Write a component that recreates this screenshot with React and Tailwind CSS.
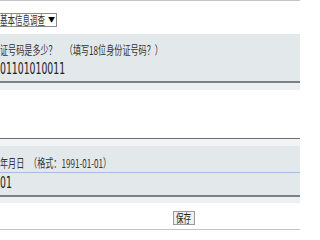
import React from "react";

const cjk = { fontFamily: '"Noto Sans CJK SC", "Liberation Sans", sans-serif' };
const num = { fontFamily: '"DejaVu Sans", "Liberation Sans", sans-serif' };

function Squish({ children, className = "" }) {
    return (
        <span className={`inline-block origin-left scale-x-[0.675] whitespace-nowrap ${className}`}>
            {children}
        </span>
    );
}

export default function App() {
    return (
        <div className="w-[300px] h-[230px] overflow-hidden bg-white flex flex-col text-[#333]" style={cjk}>
            <div className="h-px bg-[#c4c4c4]" />
            <div className="h-[12px]" />

            {/* survey select */}
            <div className="h-[14px] flex">
                <div className="w-[57px] h-[14px] border border-[#8a8a8a] border-l-0 bg-white flex items-center">
                    <div className="w-[48px] h-full flex items-center text-[12px] leading-none">
                        <span className="inline-block origin-left scale-x-[0.625] whitespace-nowrap">基本信息调查</span>
                    </div>
                    <span className="text-[7px] leading-none text-black">▼</span>
                </div>
            </div>

            <div className="h-[7px]" />

            {/* id number */}
            <div className="h-[47px] bg-[#e3e8eb] flex flex-col">
                <div className="h-[26px] pt-[9px] text-[12px] leading-[14px]">
                    <Squish>
                        证号码是多少？<span className="inline-block w-[12px]" />（填写18位身份证号码？）
                    </Squish>
                </div>
                <div className="h-[21px] pt-[1px] text-[15px] leading-[17px] text-[#222]" style={num}>
                    <span className="inline-block origin-left scale-x-[0.62] whitespace-nowrap">01101010011</span>
                </div>
            </div>
            <div className="h-[2px] bg-[#7b8086]" />
            <div className="h-[7px] bg-[#edf0f2]" />

            <div className="h-[49px]" />

            {/* birthday */}
            <div className="h-px bg-[#6e6e6e]" />
            <div className="h-[7px] bg-[#f1f3f4]" />
            <div className="h-[26px] bg-[#e3e8eb] pt-[10px] text-[12px] leading-[14px]">
                <Squish>
                    年月日<span className="inline-block w-[7px]" />（格式：1991-01-01）
                </Squish>
            </div>
            <div className="h-px bg-[#a9bde0]" />
            <div className="h-[22px] bg-[#e3e8eb] pt-[2px] text-[15px] leading-[17px] text-[#222]" style={num}>
                <span className="inline-block origin-left scale-x-[0.62] whitespace-nowrap">01</span>
            </div>
            <div className="h-[2px] bg-[#7b8086]" />
            <div className="h-[6px] bg-[#edf0f2]" />

            <div className="h-[8px]" />

            {/* save */}
            <div className="h-[14px] flex pl-[173px]">
                <button className="w-[22px] h-[14px] border border-[#9a9a9a] bg-[#f0f0f0] flex items-center pl-[2px] text-[12px] leading-none text-[#222]">
                    <span className="inline-block origin-left scale-x-[0.625] whitespace-nowrap">保存</span>
                </button>
            </div>

            <div className="h-[4px]" />
            <div className="h-px bg-[#c4c4c4]" />
        </div>
    );
}
